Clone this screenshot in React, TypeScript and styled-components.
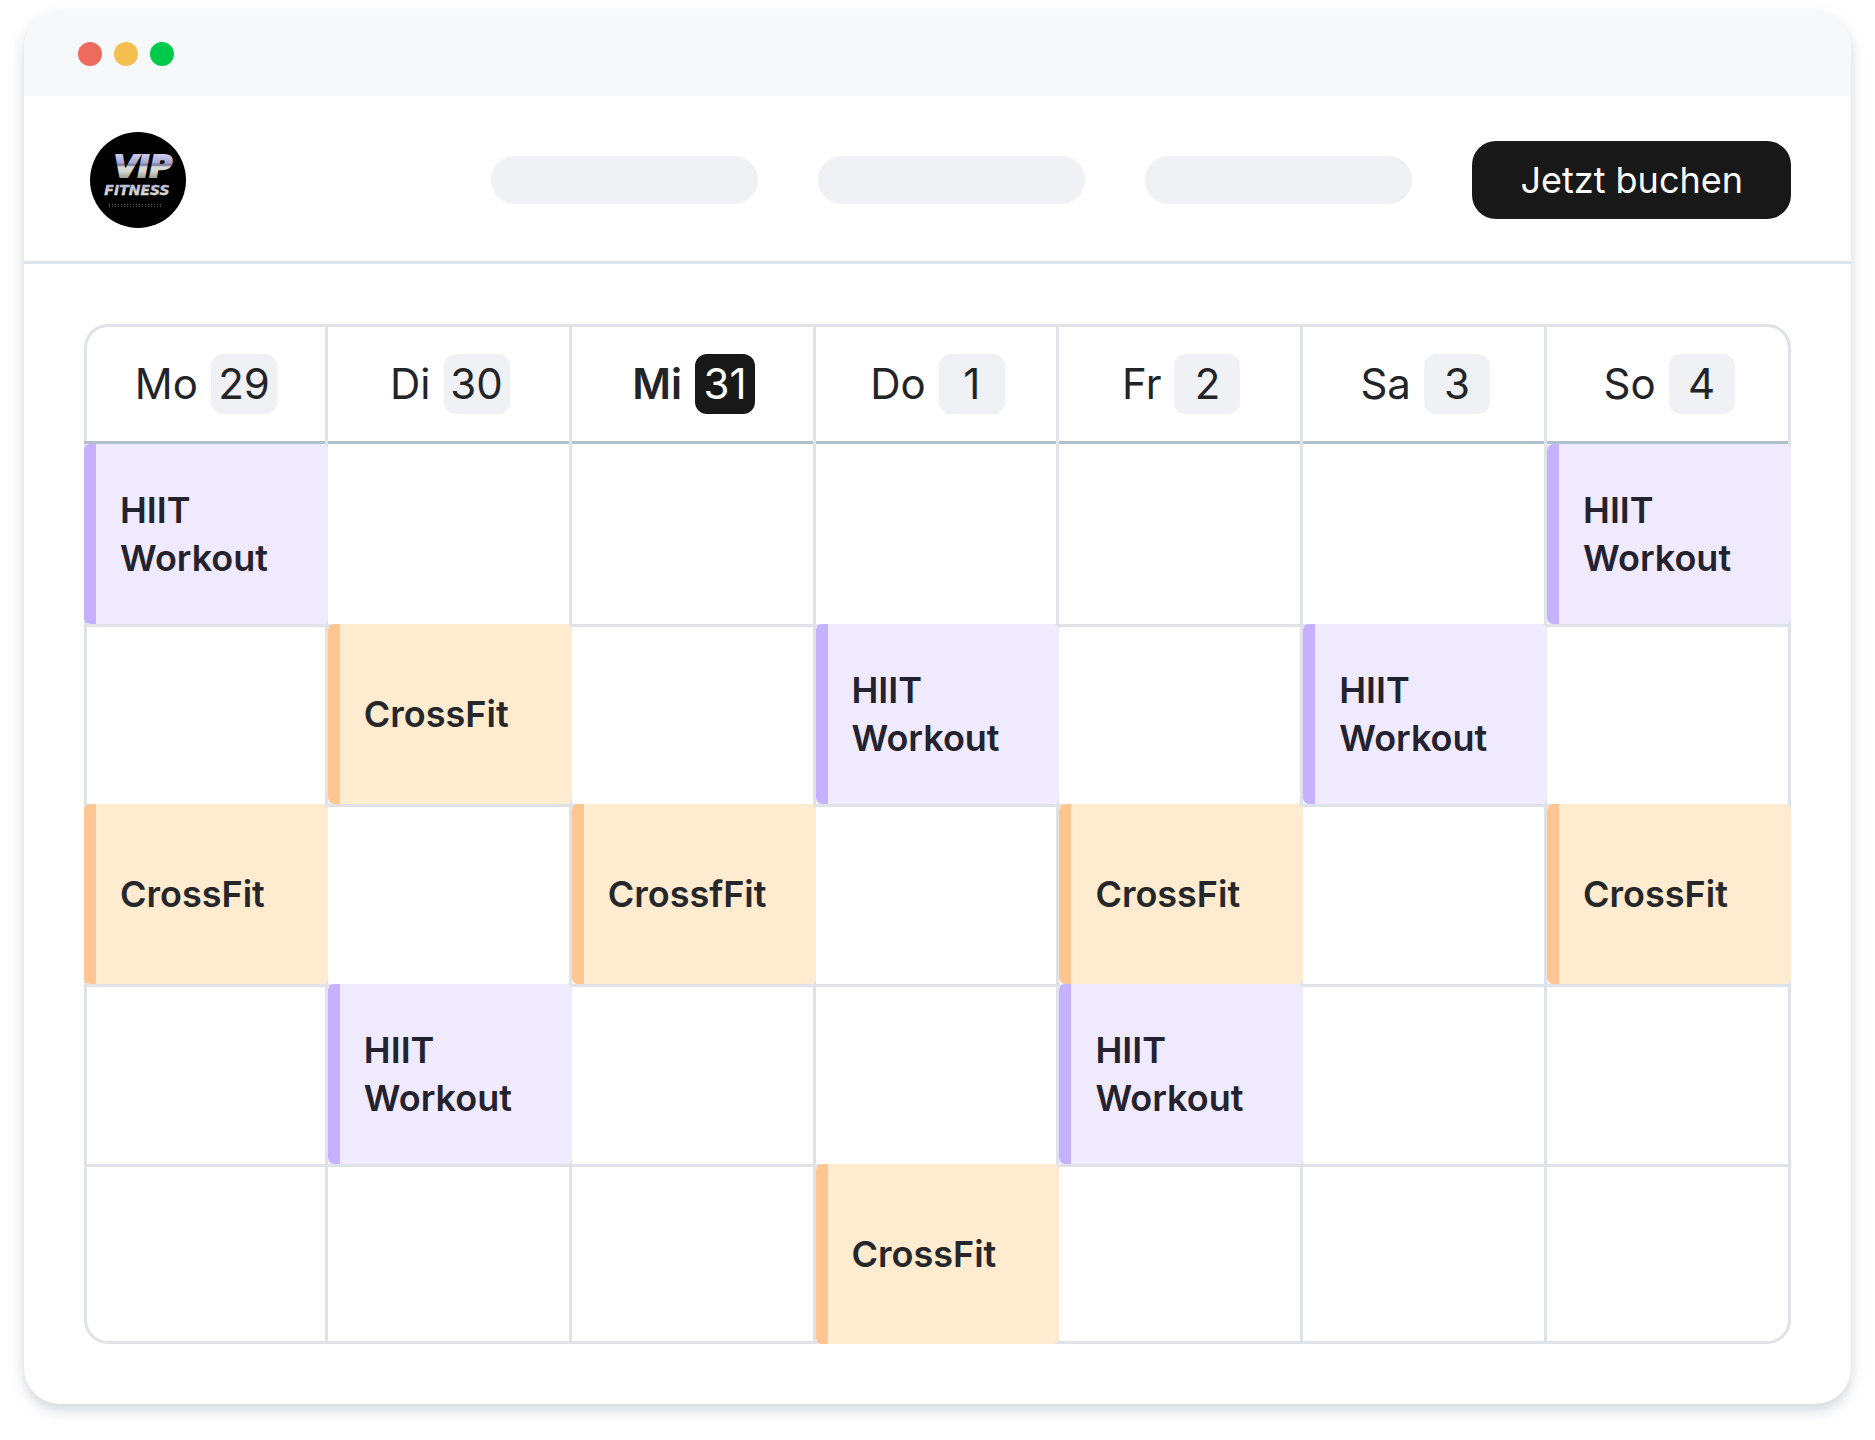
import React from "react";
import styled, { createGlobalStyle, css } from "styled-components";

const line = "#dfe3e8";
const lineStrong = "#b1bfcd";
const ink = "#232428";
const black = "#181818";

const GlobalStyle = createGlobalStyle`
  *, *::before, *::after { box-sizing: border-box; }
  body {
    margin: 0;
    background: #fff;
    color: ${ink};
    font-family: Inter, "Liberation Sans", sans-serif;
  }
`;

const Page = styled.div`
  padding: 12px 24px 36px;
`;

const BrowserWindow = styled.main`
  overflow: hidden;
  border-radius: 36px;
  background: #fff;
  box-shadow: 0 6px 12px rgba(50, 75, 100, 0.18), 0 6px 24px rgba(50, 75, 100, 0.05);
`;

const TitleBar = styled.div`
  display: flex;
  align-items: center;
  gap: 12px;
  height: 84px;
  padding: 0 54px;
  background: #f6f8fa;
`;

const Dot = styled.span<{ $color: string }>`
  width: 24px;
  height: 24px;
  border-radius: 50%;
  background: ${(p) => p.$color};
`;

const SiteHeader = styled.header`
  display: flex;
  align-items: center;
  justify-content: space-between;
  gap: 60px;
  padding: 36px 60px 33px 66px;
  border-bottom: 3px solid #dde3ea;
`;

const LogoMark = styled.svg`
  flex: none;
  width: 96px;
  height: 96px;
`;

const Nav = styled.nav`
  display: flex;
  flex: 1;
  align-items: center;
  justify-content: flex-end;
  gap: 60px;
`;

const NavPill = styled.span`
  flex: 0 1 267px;
  height: 48px;
  border-radius: 24px;
  background: #f0f1f5;
`;

const BookButton = styled.button`
  flex: none;
  padding: 15px 48px;
  border: 0;
  border-radius: 24px;
  background: ${black};
  color: #fff;
  font: 400 36px/48px Inter, "Liberation Sans", sans-serif;
  cursor: pointer;
`;

const Content = styled.section`
  padding: 60px;
`;

const Calendar = styled.table`
  width: 100%;
  table-layout: fixed;
  border-spacing: 0;
  border-radius: 24px;
  box-shadow: inset 0 0 0 3px ${line};
`;

const DayHead = styled.th`
  height: 120px;
  padding: 0;
  font-weight: 400;
  box-shadow: inset -3px 0 ${line}, inset 0 -3px ${lineStrong};

  &:first-child {
    border-top-left-radius: 24px;
  }

  &:last-child {
    border-top-right-radius: 24px;
  }
`;

const Day = styled.div<{ $today?: boolean }>`
  display: flex;
  align-items: center;
  justify-content: center;
  gap: 13px;
  font-size: 42px;
  line-height: 60px;
  font-weight: ${(p) => (p.$today ? 600 : 400)};
`;

const DateBadge = styled.span<{ $today?: boolean }>`
  width: 66px;
  border-radius: 12px;
  background: #f0f1f5;
  font-weight: 400;
  text-align: center;
  ${(p) =>
    p.$today &&
    css`
      width: 60px;
      background: ${black};
      color: #fff;
    `}
`;

const Slot = styled.td`
  height: 180px;
  padding: 0;
  box-shadow: inset -3px 0 ${line}, inset 0 3px ${line};

  &:last-child {
    box-shadow: inset 0 3px ${line};
  }

  tr:first-child > & {
    box-shadow: inset -3px 0 ${line};
  }

  tr:first-child > &:last-child {
    box-shadow: none;
  }
`;

type Kind = "hiit" | "cross";

const palette: Record<Kind, { bar: string; fill: string; text: string }> = {
  hiit: { bar: "#c6b1ff", fill: "#f0eaff", text: "#24222e" },
  cross: { bar: "#ffc592", fill: "#ffebcf", text: "#25272a" },
};

const Event = styled.div<{ $kind: Kind }>`
  display: flex;
  align-items: center;
  height: 180px;
  padding: 0 24px;
  border-left: 12px solid ${(p) => palette[p.$kind].bar};
  border-radius: 6px;
  background: ${(p) => palette[p.$kind].fill};
  color: ${(p) => palette[p.$kind].text};
  font-size: 36px;
  line-height: 48px;
  font-weight: 600;
`;

const days = [
  { name: "Mo", date: 29 },
  { name: "Di", date: 30 },
  { name: "Mi", date: 31, today: true },
  { name: "Do", date: 1 },
  { name: "Fr", date: 2 },
  { name: "Sa", date: 3 },
  { name: "So", date: 4 },
];

type Entry = { kind: Kind; title: string } | null;

const hiit: Entry = { kind: "hiit", title: "HIIT Workout" };
const cross: Entry = { kind: "cross", title: "CrossFit" };
const crossMi: Entry = { kind: "cross", title: "CrossfFit" };

const rows: Entry[][] = [
  [hiit, null, null, null, null, null, hiit],
  [null, cross, null, hiit, null, hiit, null],
  [cross, null, crossMi, null, cross, null, cross],
  [null, hiit, null, null, hiit, null, null],
  [null, null, null, cross, null, null, null],
];

function Logo() {
  return (
    <LogoMark viewBox="0 0 96 96" role="img" aria-label="VIP Fitness">
      <defs>
        <linearGradient id="vip" gradientUnits="userSpaceOnUse" x1="0" y1="23" x2="0" y2="45">
          <stop offset="0" stopColor="#c9c9ee" />
          <stop offset="0.34" stopColor="#a9a9d3" />
          <stop offset="0.46" stopColor="#77778f" />
          <stop offset="0.54" stopColor="#d9d9dc" />
          <stop offset="0.75" stopColor="#d6d4cb" />
          <stop offset="1" stopColor="#a7a595" />
        </linearGradient>
        <linearGradient id="fitness" gradientUnits="userSpaceOnUse" x1="0" y1="53" x2="0" y2="62">
          <stop offset="0" stopColor="#b9b9da" />
          <stop offset="0.5" stopColor="#c9c9d2" />
          <stop offset="1" stopColor="#dddcd2" />
        </linearGradient>
      </defs>
      <circle cx="48" cy="48" r="48" fill="#000" />
      <g fontFamily='"DejaVu Sans", sans-serif' fontWeight="700" fontStyle="italic" textAnchor="middle">
        <text x="53" y="45" fontSize="31" fill="url(#vip)" stroke="url(#vip)" strokeWidth="2">
          VIP
        </text>
        <text x="47" y="63" fontSize="14" fill="url(#fitness)" stroke="url(#fitness)" strokeWidth="0.4">
          FITNESS
        </text>
      </g>
      <path d="M19 72.5H73M19 74.5H73" stroke="#6d6d68" strokeWidth="0.8" strokeDasharray="1 2" />
    </LogoMark>
  );
}

export default function App() {
  return (
    <>
      <GlobalStyle />
      <Page>
        <BrowserWindow>
          <TitleBar>
            <Dot $color="#ec6a5e" />
            <Dot $color="#f4bf4f" />
            <Dot $color="#00ca4a" />
          </TitleBar>
          <SiteHeader>
            <Logo />
            <Nav>
              <NavPill />
              <NavPill />
              <NavPill />
            </Nav>
            <BookButton type="button">Jetzt buchen</BookButton>
          </SiteHeader>
          <Content>
            <Calendar>
              <thead>
                <tr>
                  {days.map((d) => (
                    <DayHead key={d.name} scope="col">
                      <Day $today={d.today}>
                        {d.name}
                        <DateBadge $today={d.today}>{d.date}</DateBadge>
                      </Day>
                    </DayHead>
                  ))}
                </tr>
              </thead>
              <tbody>
                {rows.map((row, r) => (
                  <tr key={r}>
                    {row.map((entry, c) => (
                      <Slot key={c}>{entry && <Event $kind={entry.kind}>{entry.title}</Event>}</Slot>
                    ))}
                  </tr>
                ))}
              </tbody>
            </Calendar>
          </Content>
        </BrowserWindow>
      </Page>
    </>
  );
}
